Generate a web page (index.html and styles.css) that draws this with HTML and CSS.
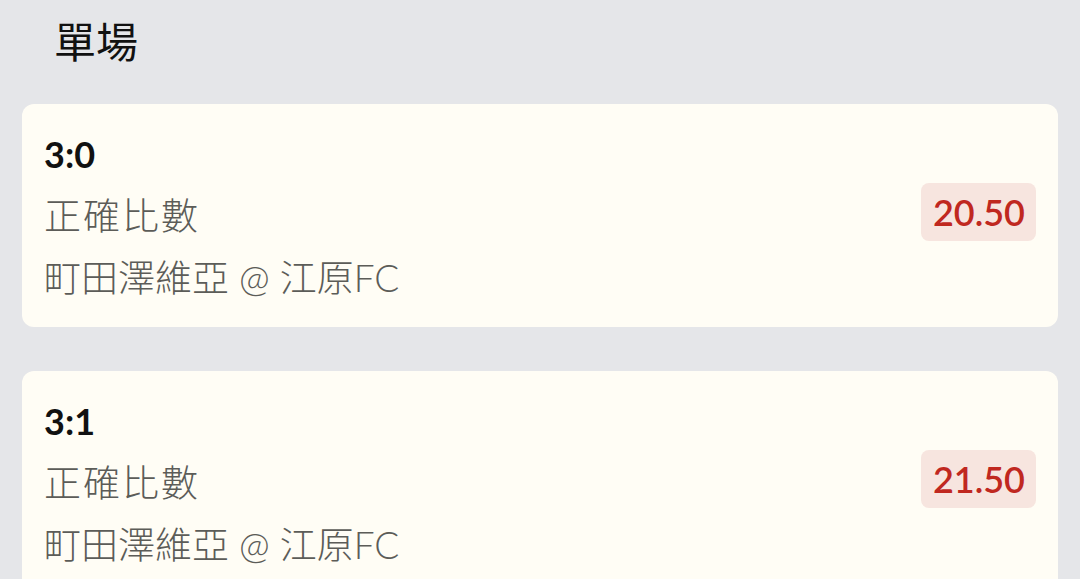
FILE: index.html
```html
<!DOCTYPE html>
<html lang="zh-Hant">
<head>
<meta charset="utf-8">
<link rel="stylesheet" href="styles.css">
</head>
<body>
<div class="page">
  <h1 class="title">單場</h1>
  <div class="list">
    <div class="card">
      <div class="info">
        <div class="score">3:0</div>
        <div class="market">正確比數</div>
        <div class="match">町田澤維亞 @ 江原FC</div>
      </div>
      <div class="odds">20.50</div>
    </div>
    <div class="card">
      <div class="info">
        <div class="score">3:1</div>
        <div class="market">正確比數</div>
        <div class="match">町田澤維亞 @ 江原FC</div>
      </div>
      <div class="odds">21.50</div>
    </div>
  </div>
</div>
</body>
</html>
```

FILE: styles.css
```css
html, body {
  margin: 0;
  padding: 0;
  background: #e5e6e9;
}
body {
  font-family: "Lato", "Noto Sans CJK TC", sans-serif;
  overflow: hidden;
}
.page {
  display: flex;
  flex-direction: column;
}
.title {
  margin: 0;
  padding-left: 54px;
  height: 80px;
  line-height: 80px;
  font-size: 42px;
  font-weight: 400;
  color: #111;
  font-family: "Noto Sans CJK TC", sans-serif;
}
.list {
  margin-top: 24px;
  padding: 0 22px;
  display: flex;
  flex-direction: column;
  gap: 44px;
}
.card {
  background: #fffdf5;
  border-radius: 12px;
  padding: 19px 22px 18px 22px;
  display: flex;
  align-items: center;
  justify-content: space-between;
}
.info {
  display: flex;
  flex-direction: column;
}
.score, .market, .match {
  height: 62px;
  line-height: 62px;
}
.score {
  font-size: 36px;
  font-weight: 700;
  color: #111;
}
.market, .match {
  font-size: 37px;
  font-weight: 300;
  color: #5c5c58;
}
.market {
  letter-spacing: 2px;
}
.odds {
  margin-top: -9px;
  background: #f7e5df;
  color: #c0281f;
  font-size: 36px;
  font-weight: 600;
  border-radius: 8px;
  padding: 0 11px 0 12px;
  height: 58px;
  line-height: 58px;
}
```
